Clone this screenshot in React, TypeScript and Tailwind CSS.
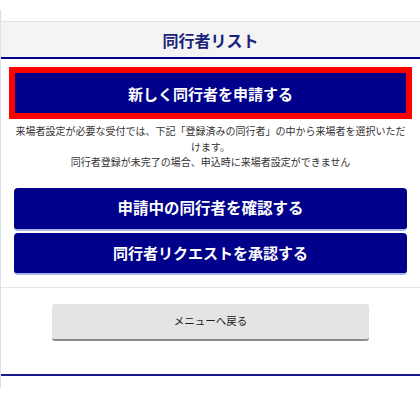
import React from "react";

const jp = { fontFamily: '"Noto Sans CJK JP", "Noto Sans", sans-serif' };

export default function App() {
  return (
    <div className="w-[420px] h-[400px] bg-white pt-[10px]" style={jp}>
      <div className="border-l border-[#dbe1ea] h-[378px] flex flex-col">
        <div className="h-[11px]" />
        <div className="border-t border-[#e2e2e2] bg-[#f4f4f4] h-[38px] border-b-2 border-b-[#00008b] flex items-center justify-center">
          <span className="text-[16px] font-bold text-[#1b237a] leading-none">同行者リスト</span>
        </div>
        <div className="mt-[8px] mx-[8px] border-[6px] border-[#ff0000] h-[52px]">
          <div className="bg-[#00008b] h-full flex items-center justify-center">
            <span className="text-white text-[15px] font-bold leading-none">新しく同行者を申請する</span>
          </div>
        </div>
        <p className="mt-[4px] px-[11px] text-center text-[10px] leading-[15.5px] text-[#333]">
          来場者設定が必要な受付では、下記「登録済みの同行者」の中から来場者を選択いただけます。
          <br />
          同行者登録が未完了の場合、申込時に来場者設定ができません
        </p>
        <div className="mt-[18px] px-[13px] flex flex-col gap-[2px]">
          <div className="h-[43px] rounded-[4px] bg-[#00008b] border-b-2 border-[#a9b6e4] flex items-center justify-center">
            <span className="text-white text-[15.5px] font-bold leading-none">申請中の同行者を確認する</span>
          </div>
          <div className="h-[42px] rounded-[4px] bg-[#00008b] border-b-2 border-[#a9b6e4] flex items-center justify-center">
            <span className="text-white text-[15px] font-bold leading-none">同行者リクエストを承認する</span>
          </div>
        </div>
        <div className="mt-[12px] border-t border-[#e6e6e6]" />
        <div className="mt-[16px] flex justify-center">
          <div className="w-[317px] h-[37px] rounded-[3px] bg-[#e4e4e4] border-b-2 border-[#8c8c8c] flex items-center justify-center">
            <span className="text-[10.5px] text-[#222] leading-none">メニューへ戻る</span>
          </div>
        </div>
        <div className="mt-[33px] border-t-2 border-[#1a1a8c]" />
      </div>
    </div>
  );
}
